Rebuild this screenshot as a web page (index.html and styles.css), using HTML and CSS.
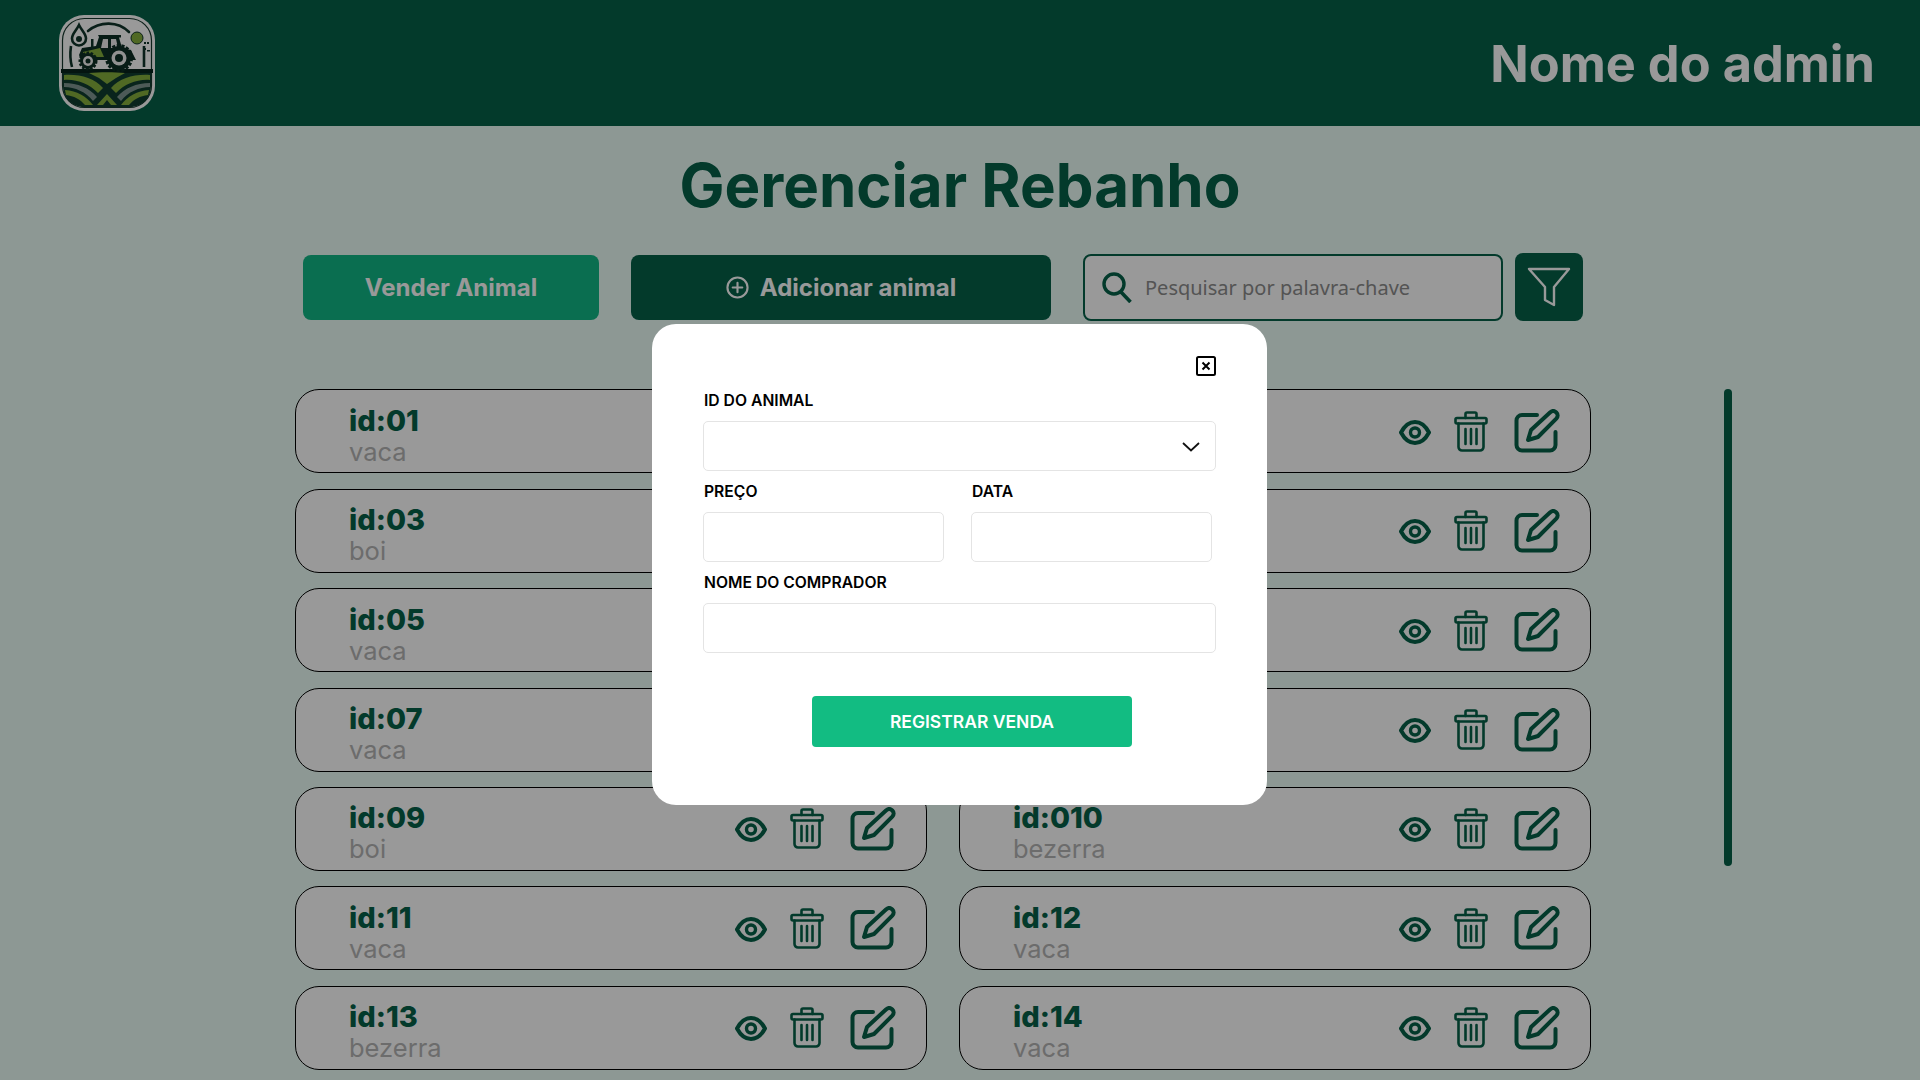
FILE: index.html
```html
<!DOCTYPE html>
<html lang="pt-BR">
<head>
  <meta charset="UTF-8" />
  <meta name="viewport" content="width=device-width, initial-scale=1.0"/>
  <title>Gerenciar Rebanho</title>
  <link rel="stylesheet" href="styles.css">
</head>
<body>
  <!-- Icon sprite -->
  <svg class="sprite" xmlns="http://www.w3.org/2000/svg">
    <symbol id="i-eye" viewBox="0 0 32 25">
      <path d="M2 12.500C6 5 11 2 16 2s10 3 14 10.500C26 20 21 23 16 23S6 20 2 12.500Z" fill="none" stroke="currentColor" stroke-width="4" stroke-linejoin="round"/>
      <circle cx="16" cy="12.500" r="4.500" fill="none" stroke="currentColor" stroke-width="3.400"/>
    </symbol>
    <symbol id="i-trash" viewBox="0 0 34 41">
      <g fill="none" stroke="currentColor" stroke-width="2.600" stroke-linejoin="round" stroke-linecap="round">
        <path d="M11.500 7V3a1.500 1.500 0 0 1 1.500-1.500h8A1.500 1.500 0 0 1 22.500 3v4"/>
        <rect x="1.500" y="7" width="31" height="5.500" rx="1.500"/>
        <path d="M4.500 12.500V36a3.500 3.500 0 0 0 3.500 3.500h18a3.500 3.500 0 0 0 3.500-3.500V12.500"/>
        <path d="M11.500 18v15M17 18v15M22.500 18v15"/>
      </g>
    </symbol>
    <symbol id="i-edit" viewBox="0 0 46 44">
      <g fill="none" stroke="currentColor" stroke-width="4" stroke-linejoin="round" stroke-linecap="round">
        <path d="M23 6H8a5.500 5.500 0 0 0-5.500 5.500V36A5.500 5.500 0 0 0 8 41.500h28a5.500 5.500 0 0 0 5.500-5.500V23"/>
        <path d="M14 31l3-10L36 3.500c2-1.800 4.500-1.800 6.300 0s1.800 4.300 0 6.200L24 28Z"/>
      </g>
    </symbol>
  </svg>

  <header class="topbar">
    <svg class="logo" viewBox="0 0 96 96" xmlns="http://www.w3.org/2000/svg" role="img" aria-label="Logo">
      <rect width="96" height="96" rx="25" fill="#fff"/>
      <rect x="3.500" y="3.500" width="89" height="89" rx="22" fill="none" stroke="#17372d" stroke-width="1.200"/>
      <path d="M4 56h88v15c0 12-9 21-21 21H25C13 92 4 83 4 71Z" fill="#0f3d30"/>
      <path d="M2 54h92v4H2z" fill="#08241c"/>
      <path d="M5 60c16-1 30 3 39 13l-5 5C30 69 18 64 5 65Z" fill="#86b03c"/>
      <path d="M5 68c14 0 25 5 33 14l-4 4C27 77 16 72 5 72Z" fill="#f2f2f2" opacity=".5"/>
      <path d="M6 75c12 1 21 6 28 15h-8c-5-6-11-9-19-10Z" fill="#86b03c"/>
      <path d="M91 60c-16-1-30 3-39 13l5 5c9-9 21-14 34-13Z" fill="#86b03c"/>
      <path d="M91 68c-14 0-25 5-33 14l4 4c7-9 18-14 29-14Z" fill="#f2f2f2" opacity=".5"/>
      <path d="M90 75c-12 1-21 6-28 15h8c5-6 11-9 19-10Z" fill="#86b03c"/>
      <path d="M38 90l10-11 10 11h-6l-4-5-4 5Z" fill="#86b03c"/>
      <path d="M30 58c10-1 26-1 36 0l-9 5-9 6-8-6Z" fill="#86b03c"/>
      <path d="M20 10c-3 6-7 9-7 13.500a7 7 0 0 0 14 0C27 19 23 16 20 10Z" fill="none" stroke="#10352a" stroke-width="2.600"/>
      <circle cx="20" cy="24" r="3" fill="#10352a"/>
      <path d="M29 16c12-10 30-10 41 1" fill="none" stroke="#10352a" stroke-width="2.600" stroke-linecap="round"/>
      <circle cx="78" cy="23" r="6" fill="#86b03c" stroke="#10352a" stroke-width="1"/>
      <path d="M12 31c-1 7-1 14 1 21M85 31v21" fill="none" stroke="#10352a" stroke-width="2.600"/>
      <path d="M39 20h23v2.500h-2l3 10.500 9 2 5 10H22l-2-5 3-7 14-2 3-9Z" fill="#0d2f25"/>
      <path d="M44 24h5v9h-7ZM52 24h5l2 9h-7Z" fill="#efefef"/>
      <path d="M24 37l17-4 4 9H24Z" fill="#86b03c"/>
      <path d="M32 34v-10h2.500v10Z" fill="#10352a"/>
      <circle cx="60" cy="43" r="12" fill="#0d2f25" stroke="#0d2f25" stroke-width="4" stroke-dasharray="3 1.500"/>
      <circle cx="60" cy="43" r="7.500" fill="#f2f2f2"/>
      <circle cx="60" cy="43" r="4" fill="#0d2f25"/>
      <circle cx="29" cy="46" r="8" fill="#0d2f25" stroke="#0d2f25" stroke-width="3" stroke-dasharray="2.500 1.500"/>
      <circle cx="29" cy="46" r="5" fill="#f2f2f2"/>
      <circle cx="29" cy="46" r="2.500" fill="#0d2f25"/>
      <path d="M85 27h2v2h-2zM88 27h2v2h-2zM85 33h2v2h-2zM88 35h3v1.500h-3z" fill="#10352a"/>
    </svg>
    <span class="admin-name">Nome do admin</span>
  </header>

  <main>
    <h1 class="page-title">Gerenciar Rebanho</h1>

    <div class="toolbar">
      <button class="btn btn-sell">Vender Animal</button>
      <button class="btn btn-add">
        <svg class="plus-icon" viewBox="0 0 24 24" xmlns="http://www.w3.org/2000/svg">
          <circle cx="12" cy="12" r="10.500" fill="none" stroke="currentColor" stroke-width="2.200"/>
          <path d="M12 7v10M7 12h10" fill="none" stroke="currentColor" stroke-width="2.200" stroke-linecap="round"/>
        </svg>
        Adicionar animal
      </button>
      <div class="search-box">
        <svg class="search-icon" viewBox="0 0 30 31" xmlns="http://www.w3.org/2000/svg">
          <circle cx="12" cy="12" r="10" fill="none" stroke="currentColor" stroke-width="3.400"/>
          <path d="M19 20l9.500 10" fill="none" stroke="currentColor" stroke-width="3.600"/>
        </svg>
        <input type="text" placeholder="Pesquisar por palavra-chave" />
      </div>
      <button class="filter-btn" aria-label="Filtrar">
        <svg viewBox="0 0 44 40" xmlns="http://www.w3.org/2000/svg">
          <path d="M2 2h40L27 20v18l-9-5V20Z" fill="none" stroke="currentColor" stroke-width="2.400" stroke-linejoin="round"/>
        </svg>
      </button>
    </div>

    <div class="list-area">
      <div class="animal-list">
        <div class="animal-card">
          <div class="animal-info"><strong>id:01</strong><span>vaca</span></div>
          <div class="actions"><svg class="eye"><use href="#i-eye"/></svg><svg class="trash"><use href="#i-trash"/></svg><svg class="edit"><use href="#i-edit"/></svg></div>
        </div>
        <div class="animal-card">
          <div class="animal-info"><strong>id:02</strong><span>vaca</span></div>
          <div class="actions"><svg class="eye"><use href="#i-eye"/></svg><svg class="trash"><use href="#i-trash"/></svg><svg class="edit"><use href="#i-edit"/></svg></div>
        </div>
        <div class="animal-card">
          <div class="animal-info"><strong>id:03</strong><span>boi</span></div>
          <div class="actions"><svg class="eye"><use href="#i-eye"/></svg><svg class="trash"><use href="#i-trash"/></svg><svg class="edit"><use href="#i-edit"/></svg></div>
        </div>
        <div class="animal-card">
          <div class="animal-info"><strong>id:04</strong><span>vaca</span></div>
          <div class="actions"><svg class="eye"><use href="#i-eye"/></svg><svg class="trash"><use href="#i-trash"/></svg><svg class="edit"><use href="#i-edit"/></svg></div>
        </div>
        <div class="animal-card">
          <div class="animal-info"><strong>id:05</strong><span>vaca</span></div>
          <div class="actions"><svg class="eye"><use href="#i-eye"/></svg><svg class="trash"><use href="#i-trash"/></svg><svg class="edit"><use href="#i-edit"/></svg></div>
        </div>
        <div class="animal-card">
          <div class="animal-info"><strong>id:06</strong><span>boi</span></div>
          <div class="actions"><svg class="eye"><use href="#i-eye"/></svg><svg class="trash"><use href="#i-trash"/></svg><svg class="edit"><use href="#i-edit"/></svg></div>
        </div>
        <div class="animal-card">
          <div class="animal-info"><strong>id:07</strong><span>vaca</span></div>
          <div class="actions"><svg class="eye"><use href="#i-eye"/></svg><svg class="trash"><use href="#i-trash"/></svg><svg class="edit"><use href="#i-edit"/></svg></div>
        </div>
        <div class="animal-card">
          <div class="animal-info"><strong>id:08</strong><span>vaca</span></div>
          <div class="actions"><svg class="eye"><use href="#i-eye"/></svg><svg class="trash"><use href="#i-trash"/></svg><svg class="edit"><use href="#i-edit"/></svg></div>
        </div>
        <div class="animal-card">
          <div class="animal-info"><strong>id:09</strong><span>boi</span></div>
          <div class="actions"><svg class="eye"><use href="#i-eye"/></svg><svg class="trash"><use href="#i-trash"/></svg><svg class="edit"><use href="#i-edit"/></svg></div>
        </div>
        <div class="animal-card">
          <div class="animal-info"><strong>id:010</strong><span>bezerra</span></div>
          <div class="actions"><svg class="eye"><use href="#i-eye"/></svg><svg class="trash"><use href="#i-trash"/></svg><svg class="edit"><use href="#i-edit"/></svg></div>
        </div>
        <div class="animal-card">
          <div class="animal-info"><strong>id:11</strong><span>vaca</span></div>
          <div class="actions"><svg class="eye"><use href="#i-eye"/></svg><svg class="trash"><use href="#i-trash"/></svg><svg class="edit"><use href="#i-edit"/></svg></div>
        </div>
        <div class="animal-card">
          <div class="animal-info"><strong>id:12</strong><span>vaca</span></div>
          <div class="actions"><svg class="eye"><use href="#i-eye"/></svg><svg class="trash"><use href="#i-trash"/></svg><svg class="edit"><use href="#i-edit"/></svg></div>
        </div>
        <div class="animal-card">
          <div class="animal-info"><strong>id:13</strong><span>bezerra</span></div>
          <div class="actions"><svg class="eye"><use href="#i-eye"/></svg><svg class="trash"><use href="#i-trash"/></svg><svg class="edit"><use href="#i-edit"/></svg></div>
        </div>
        <div class="animal-card">
          <div class="animal-info"><strong>id:14</strong><span>vaca</span></div>
          <div class="actions"><svg class="eye"><use href="#i-eye"/></svg><svg class="trash"><use href="#i-trash"/></svg><svg class="edit"><use href="#i-edit"/></svg></div>
        </div>
      </div>
      <div class="scroll-thumb"></div>
    </div>
  </main>

  <!-- Sale modal -->
  <div class="overlay">
    <form class="modal">
      <div class="modal-top">
        <svg class="close-icon" viewBox="0 0 20 20" xmlns="http://www.w3.org/2000/svg">
          <rect x="1" y="1" width="18" height="18" rx="1.500" fill="none" stroke="#000" stroke-width="2"/>
          <path d="M6.500 6.500l7 7M13.500 6.500l-7 7" fill="none" stroke="#000" stroke-width="2"/>
        </svg>
      </div>

      <label class="field-label">ID do animal</label>
      <div class="select-box">
        <svg viewBox="0 0 18 10" xmlns="http://www.w3.org/2000/svg">
          <path d="M1 1l8 7.500L17 1" fill="none" stroke="#111" stroke-width="1.800"/>
        </svg>
      </div>

      <div class="field-row">
        <div class="field">
          <label class="field-label">Preço</label>
          <input class="field-input" type="text" />
        </div>
        <div class="field">
          <label class="field-label">Data</label>
          <input class="field-input" type="text" />
        </div>
      </div>

      <label class="field-label">Nome do comprador</label>
      <input class="field-input" type="text" />

      <button class="submit-btn" type="button">Registrar venda</button>
    </form>
  </div>
</body>
</html>
```

FILE: styles.css
```css
* {
  box-sizing: border-box;
}

html, body {
  height: 1080px;
  margin: 0;
  overflow: hidden;
}

body {
  font-family: Inter, "Open Sans", sans-serif;
  background: #ebfdf7;
}

.sprite {
  display: none;
}

.topbar {
  height: 126px;
  background: #056149;
  display: flex;
  align-items: center;
  justify-content: space-between;
  padding: 0 45px 0 59px;
}

.logo {
  width: 96px;
  height: 96px;
}

.admin-name {
  color: #fff;
  font-size: 50.5px;
  font-weight: 700;
}

.page-title {
  margin: 25px 0 34px;
  color: #056149;
  font-size: 60px;
  font-weight: 700;
  line-height: 68px;
  text-align: center;
}

.toolbar {
  display: flex;
  align-items: center;
  margin-left: 303px;
}

.btn {
  height: 65px;
  border: none;
  border-radius: 8px;
  color: #fff;
  font-family: inherit;
  font-size: 24px;
  font-weight: 700;
  display: flex;
  align-items: center;
  justify-content: center;
  gap: 11px;
}

.btn-sell {
  width: 296px;
  margin-right: 32px;
  background: #12b886;
}

.btn-add {
  width: 420px;
  margin-right: 32px;
  background: #056149;
}

.plus-icon {
  width: 23px;
  height: 23px;
}

.search-box {
  width: 420px;
  height: 67px;
  margin-right: 12px;
  background: #fff;
  border: 2px solid #056149;
  border-radius: 8px;
  display: flex;
  align-items: center;
  padding-left: 17px;
  gap: 11px;
  color: #056149;
}

.search-icon {
  width: 30px;
  height: 31px;
  flex: none;
}

.search-box input {
  flex: 1;
  min-width: 0;
  border: none;
  outline: none;
  background: none;
  font-family: "Noto Sans", sans-serif;
  font-size: 20px;
}

.search-box input::placeholder {
  color: #8c8c8c;
  opacity: 1;
}

.filter-btn {
  width: 68px;
  height: 68px;
  padding: 0;
  border: none;
  border-radius: 8px;
  background: #056149;
  color: #fff;
  display: flex;
  align-items: center;
  justify-content: center;
}

.filter-btn svg {
  width: 44px;
  height: 40px;
}

.list-area {
  display: flex;
  margin: 68.4px 0 0 295px;
  gap: 133px;
}

.animal-list {
  width: 1296px;
  display: grid;
  grid-template-columns: 632px 632px;
  column-gap: 32px;
  row-gap: 15.4px;
}

.animal-card {
  height: 84px;
  background: #fff;
  border: 1px solid #000;
  border-radius: 24px;
  display: flex;
  align-items: center;
  justify-content: space-between;
  padding: 0 30px 0 53px;
}

.animal-info {
  display: flex;
  flex-direction: column;
  padding-top: 9px;
}

.animal-info strong {
  color: #056149;
  font-size: 29px;
  font-weight: 800;
  line-height: 32px;
}

.animal-info span {
  color: #b4b4b4;
  font-size: 25.5px;
  line-height: 30px;
}

.actions {
  display: flex;
  align-items: center;
  color: #056149;
}

.actions .eye {
  width: 32px;
  height: 25px;
  margin-right: 23px;
  margin-top: 2px;
}

.actions .trash {
  width: 34px;
  height: 41px;
  margin-right: 26px;
}

.actions .edit {
  width: 46px;
  height: 44px;
}

.scroll-thumb {
  width: 8px;
  height: 477px;
  border-radius: 4px;
  background: #056149;
}

.overlay {
  position: fixed;
  top: 0;
  left: 0;
  right: 0;
  bottom: 0;
  background: rgba(0, 0, 0, 0.4);
}

.modal {
  width: 615px;
  height: 481px;
  margin: 324px 0 0 652px;
  padding: 32px 51px 0;
  background: #fff;
  border-radius: 24px;
}

.modal-top {
  display: flex;
  justify-content: flex-end;
  margin-bottom: 12px;
}

.close-icon {
  width: 20px;
  height: 20px;
}

.field-label {
  display: block;
  margin: 0 0 7px 1px;
  color: #000;
  font-size: 15.7px;
  font-weight: 600;
  line-height: 26px;
  text-transform: uppercase;
}

.select-box,
.field-input {
  display: block;
  width: 100%;
  height: 50px;
  background: #fff;
  border: 1.5px solid #e4e4e4;
  border-radius: 5px;
}

.select-box {
  display: flex;
  align-items: center;
  justify-content: flex-end;
  padding-right: 15px;
  margin-bottom: 8px;
}

.select-box svg {
  width: 18px;
  height: 10px;
  margin-top: 2px;
}

.field-row {
  display: grid;
  grid-template-columns: 241px 241px;
  column-gap: 27px;
  margin-bottom: 8px;
}

.submit-btn {
  display: block;
  width: 320px;
  height: 51px;
  margin: 43px 0 0 109px;
  border: none;
  border-radius: 4px;
  background: #12bc82;
  color: #fff;
  font-family: inherit;
  font-size: 17.5px;
  font-weight: 600;
  text-transform: uppercase;
}
```
